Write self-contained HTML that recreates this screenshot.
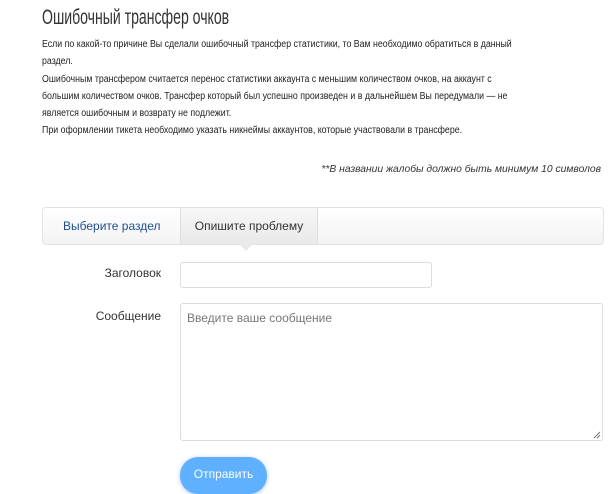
<!DOCTYPE html>
<html><head><meta charset="utf-8"><style>
body{margin:0;background:#fff;font-family:"Liberation Sans",sans-serif;color:#222;width:610px;height:492px;overflow:hidden;position:relative}
h1{position:absolute;left:42px;top:6px;margin:0;font-size:21px;font-weight:normal;color:#333;transform:scaleX(0.67);transform-origin:left;white-space:nowrap}
.ps{position:absolute;left:42px;top:36px;width:600px;font-size:10px;line-height:17.3px;color:#222}
.ps div{transform:scaleX(0.88);transform-origin:left;white-space:nowrap;margin-bottom:0}
.note{position:absolute;right:9px;top:164px;font-size:10.3px;font-style:italic;color:#333}
.tabs{position:absolute;left:42px;top:207px;width:560px;height:36px;border:1px solid #e3e3e3;border-radius:4px;background:linear-gradient(#fff,#f3f3f3)}
.t1{position:absolute;left:20px;top:11px;font-size:12px;color:#1f4f8f}
.t2{position:absolute;left:137px;top:0;width:136px;height:36px;background:linear-gradient(#f7f7f7,#e9e9e9);border-left:1px solid #ddd;border-right:1px solid #ddd;font-size:12px;color:#333;text-align:center;line-height:36px}
.arr{position:absolute;left:196px;top:36px;width:0;height:0;border-left:7px solid transparent;border-right:7px solid transparent;border-top:7px solid #e9e9e9}
.lbl{position:absolute;font-size:12px;color:#333;text-align:right;width:120px;left:41px}
.in{position:absolute;border:1px solid #ddd;border-radius:3px;background:#fff}
.btn{position:absolute;left:180px;top:457px;width:87px;height:37px;border-radius:18px;background:#5fb0ff;color:#fff;font-size:12px;text-align:center;line-height:35px;box-shadow:0 1px 4px rgba(90,150,255,.5)}
</style></head><body>
<h1>Ошибочный трансфер очков</h1>
<div class="ps">
<div>Если по какой-то причине Вы сделали ошибочный трансфер статистики, то Вам необходимо обратиться в данный</div>
<div>раздел.</div>
<div>Ошибочным трансфером считается перенос статистики аккаунта с меньшим количеством очков, на аккаунт с</div>
<div>большим количеством очков. Трансфер который был успешно произведен и в дальнейшем Вы передумали — не</div>
<div>является ошибочным и возврату не подлежит.</div>
<div>При оформлении тикета необходимо указать никнеймы аккаунтов, которые участвовали в трансфере.</div>
</div>
<div class="note">**В названии жалобы должно быть минимум 10 символов</div>
<div class="tabs"><div class="t1">Выберите раздел</div><div class="t2">Опишите проблему</div><div class="arr"></div></div>
<div class="lbl" style="top:266px">Заголовок</div>
<div class="in" style="left:180px;top:262px;width:250px;height:24px"></div>
<div class="lbl" style="top:309px">Сообщение</div>
<div class="in" style="left:180px;top:303px;width:421px;height:136px"><span style="position:absolute;left:6px;top:7px;font-size:12px;color:#777">Введите ваше сообщение</span>
<svg style="position:absolute;right:1px;bottom:1px" width="8" height="8"><path d="M1 7L7 1M4 7L7 4" stroke="#777" stroke-width="1"/></svg></div>
<div class="btn">Отправить</div>
</body></html>
